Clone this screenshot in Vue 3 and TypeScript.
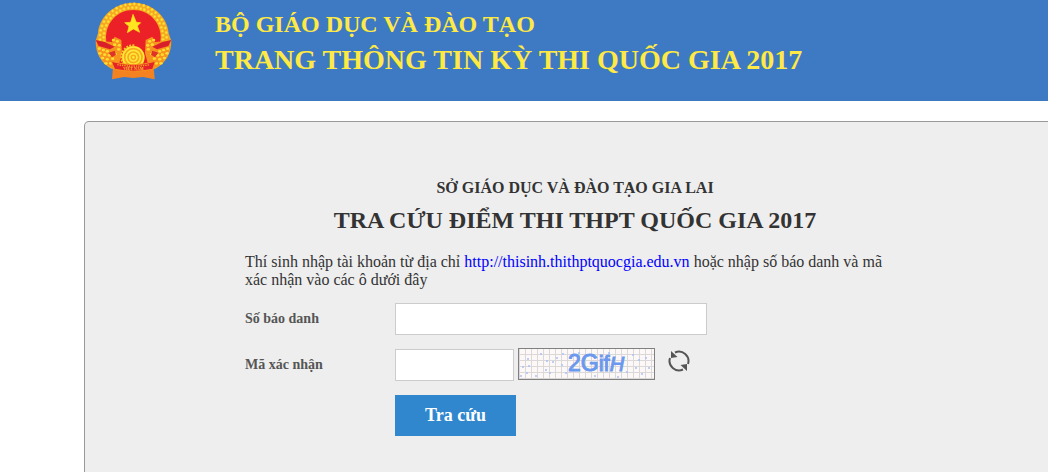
<script setup lang="ts">
import { ref } from 'vue'

const candidateId = ref('')
const captcha = ref('')

const beads = Array.from({ length: 58 }, (_, i) => {
  const a = ((-204 + Math.floor(i / 2) * 8 + (i % 2) * 4) * Math.PI) / 180
  const r = i % 2 ? 100 : 89
  return { x: Math.round(148 + r * Math.cos(a)), y: Math.round(112 + r * Math.sin(a)) }
})
const husks = [
  [88, 120], [100, 124], [106, 136], [92, 134], [104, 148], [46, 146], [58, 150], [70, 154],
  [48, 160], [62, 164], [76, 166], [56, 174], [70, 178], [86, 176], [66, 190], [80, 190], [94, 162],
]
const gearTeeth = Array.from({ length: 13 }, (_, i) => 90 + i * 15)
const specks = [
  [9, 10], [10, 17], [4, 18], [22, 5], [28, 12], [27, 21], [31, 24], [38, 9], [43, 16], [44, 5],
  [8, 24], [2, 27], [34, 13], [47, 24], [114, 6], [120, 11], [127, 9], [130, 19], [117, 19],
  [108, 23], [123, 25], [60, 4], [76, 27], [99, 28], [90, 4], [17, 27],
]
</script>

<template>
  <div class="page">
    <header class="banner">
      <svg class="emblem" viewBox="33 6 231 234" role="img" aria-label="Quốc huy Việt Nam">
        <path d="M88 190 L84 238 L120 231 L148 234 L177 231 L212 238 L208 190Z" fill="#f58220" />
        <path d="M148 8 C208 8 252 54 254 100 L262 122 C262 160 246 188 214 206 L82 206 C50 188 35 160 35 122 L42 100 C44 54 88 8 148 8Z" fill="#f5a623" />
        <circle v-for="(b, i) in beads" :key="i" :cx="b.x" :cy="b.y" r="4" fill="#ffe838" stroke="#f9bd25" stroke-width="2" />
        <path d="M148 30 C198 30 230 70 230 112 C230 150 208 184 190 196 L106 196 C88 184 66 150 66 112 C66 70 98 30 148 30Z" fill="#ec2027" />
        <path d="M37 122 L84 126 L92 110 L112 120 L114 160 L104 196 L84 204 C54 188 38 160 37 122Z" fill="#f7941d" />
        <path d="M260 122 L213 126 L205 110 L185 120 L183 160 L193 196 L213 204 C243 188 259 160 260 122Z" fill="#f7941d" />
        <g fill="#ffdc30">
          <g v-for="([x, y], i) in husks" :key="i">
            <ellipse :cx="x" :cy="y" rx="5" ry="4" />
            <ellipse :cx="297 - x" :cy="y" rx="5" ry="4" />
          </g>
        </g>
        <path d="M35 120 L62 126 L92 140 L78 148 L44 138Z M262 120 L235 126 L205 140 L219 148 L253 138Z" fill="#d9202a" />
        <path d="M74 158 L92 152 L96 164 L84 172Z M223 158 L205 152 L201 164 L213 172Z" fill="#e0312a" />
        <path d="M147 43 L157 67 L170 68 L160 78 L167 97 L148 87 L130 98 L135 79 L122 68 L140 67Z" fill="#ffe61e" stroke="#ffe61e" stroke-width="2" />
        <g transform="translate(148 172)">
          <circle r="34" fill="#f7a91c" />
          <rect v-for="a in gearTeeth" :key="a" x="33" y="-3" width="6" height="6" fill="#fbc726" :transform="`rotate(${a})`" />
          <g fill="none" stroke="#ffe838" stroke-width="5">
            <circle r="31" />
            <circle r="21" />
            <circle r="11" />
          </g>
          <circle r="4" fill="#ffe838" />
        </g>
        <path d="M82 184 Q148 204 214 184 L206 208 Q148 219 92 208Z" fill="#e5222a" stroke="#f7941d" stroke-width="3" />
        <path d="M100 194 Q148 203 198 194" fill="none" stroke="#f7a91c" stroke-width="4" stroke-dasharray="4 3" />
        <text class="emblem-name" x="148" y="211" text-anchor="middle">VIỆT NAM</text>
      </svg>
      <div class="titles">
        <p class="ministry">BỘ GIÁO DỤC VÀ ĐÀO TẠO</p>
        <p class="portal">TRANG THÔNG TIN KỲ THI QUỐC GIA 2017</p>
      </div>
    </header>

    <main class="panel">
      <form class="lookup" @submit.prevent>
        <h2 class="department">SỞ GIÁO DỤC VÀ ĐÀO TẠO GIA LAI</h2>
        <h1 class="heading">TRA CỨU ĐIỂM THI THPT QUỐC GIA 2017</h1>
        <p class="hint">
          Thí sinh nhập tài khoản từ địa chỉ
          <a href="http://thisinh.thithptquocgia.edu.vn">http://thisinh.thithptquocgia.edu.vn</a>
          hoặc nhập số báo danh và mã xác nhận vào các ô dưới đây
        </p>
        <div class="fields">
          <label for="candidate">Số báo danh</label>
          <input id="candidate" v-model="candidateId" class="field" type="text" />
          <label for="captcha">Mã xác nhận</label>
          <div class="captcha-row">
            <input id="captcha" v-model="captcha" class="field short" type="text" />
            <svg class="captcha" viewBox="0 0 135 30" role="img" aria-label="Hình mã xác nhận">
              <defs>
                <pattern id="grid" x="0" y="5" width="6" height="6" patternUnits="userSpaceOnUse">
                  <path d="M0 .5H6M.5 0V6" stroke="#dcd8d8" fill="none" />
                </pattern>
              </defs>
              <rect width="135" height="30" fill="#fdf8f8" />
              <rect width="135" height="30" fill="url(#grid)" />
              <circle v-for="([x, y], i) in specks" :key="i" :cx="x" :cy="y" r="1" fill="#a9c1f7" />
              <text class="code" x="49" y="22"><tspan class="large">2G</tspan>if<tspan class="slanted">H</tspan></text>
            </svg>
            <button class="refresh" type="button" aria-label="Đổi mã xác nhận">
              <svg viewBox="0 0 24 24" fill="none" stroke="#555" stroke-width="2">
                <path d="M8 3.500 A9.500 9.500 0 0 1 21 15" />
                <path d="M16 20.500 A9.500 9.500 0 0 1 3 9" />
                <path d="M4 2 L10.500 8 L4 9Z M20 22 L13.500 16 L20 15Z" fill="#555" stroke="none" />
              </svg>
            </button>
          </div>
          <button class="submit" type="submit">Tra cứu</button>
        </div>
      </form>
    </main>
  </div>
</template>

<style>
body {
  margin: 0;
  background: #fff;
}
</style>

<style scoped>
.page {
  overflow: hidden;
  font-family: "Liberation Serif", "Times New Roman", serif;
  color: #333;
}
.banner {
  display: flex;
  align-items: flex-start;
  gap: 43px;
  min-height: 101px;
  padding: 2px 24px 0 95px;
  box-sizing: border-box;
  background: #3e7ac3;
}
.emblem {
  flex: none;
  width: 77px;
  height: 78px;
}
.emblem-name {
  font: bold 12px "Liberation Serif", serif;
  fill: #ffc82e;
}
.titles {
  padding-top: 5px;
  color: #ffe944;
  font-weight: bold;
}
.titles p {
  margin: 0;
}
.ministry {
  font-size: 24px;
  line-height: 34px;
}
.portal {
  font-size: 28px;
  line-height: 38px;
}
.panel {
  margin: 20px -18px 0 84px;
  padding: 56px 24px 36px;
  border: 1px solid #999;
  border-bottom: 0;
  border-radius: 5px 5px 0 0;
  background: #eee;
}
.lookup {
  max-width: 660px;
  margin: 0 auto;
}
.department,
.heading {
  margin: 0;
  text-align: center;
}
.department {
  font-size: 16px;
  line-height: 20px;
}
.heading {
  margin-top: 6px;
  font-size: 24px;
  line-height: 32px;
}
.hint {
  margin: 17px 0 14px;
  font-size: 16px;
  line-height: 18px;
}
.hint a {
  color: #00f;
  text-decoration: none;
}
.fields {
  display: grid;
  grid-template-columns: 150px 1fr;
  row-gap: 14px;
  align-items: center;
}
.fields label {
  font-size: 14px;
  font-weight: bold;
  color: #555;
}
.field {
  width: 312px;
  height: 32px;
  box-sizing: border-box;
  padding: 4px 8px;
  border: 1px solid #ccc;
  background: #fff;
  font: inherit;
}
.short {
  width: 119px;
}
.captcha-row {
  display: flex;
  align-items: flex-start;
}
.captcha {
  width: 135px;
  height: 30px;
  margin: -1px 0 0 4px;
  border: 1px solid #808080;
}
.code {
  font: 22px "Liberation Sans", Arial, sans-serif;
  fill: #6a98ee;
  stroke: #6a98ee;
  stroke-width: 1;
}
.large {
  font-size: 23px;
}
.slanted {
  font-size: 20px;
  font-style: italic;
}
.refresh {
  width: 24px;
  height: 24px;
  margin-left: 12px;
  padding: 0;
  border: 0;
  background: none;
}
.refresh svg {
  display: block;
}
.submit {
  grid-column: 2;
  justify-self: start;
  height: 41px;
  padding: 0 30px;
  border: 0;
  background: #3087ce;
  color: #fff;
  font: bold 18px "Liberation Serif", "Times New Roman", serif;
}
</style>
